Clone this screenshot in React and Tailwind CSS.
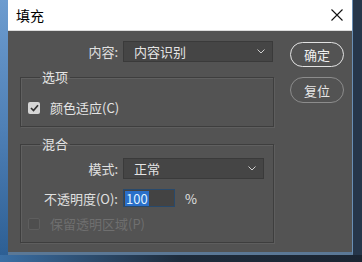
import React from "react";

const font = { fontFamily: '"Microsoft YaHei","Noto Sans CJK SC","Noto Sans",sans-serif' };

function Chevron() {
  return (
    <svg width="8" height="5" viewBox="0 0 8 5" className="shrink-0">
      <path d="M0.5 0.5 L4 4 L7.5 0.5" fill="none" stroke="#cfcfcf" strokeWidth="1" />
    </svg>
  );
}

function Select({ text, w }) {
  return (
    <div className={`flex h-[21px] items-center justify-between border border-[#3a3a3a] bg-[#454545] pl-[10px] pr-[7px] ${w}`}>
      <span className="text-[13px] leading-none text-[#e4e4e4]">{text}</span>
      <Chevron />
    </div>
  );
}

export default function App() {
  return (
    <div className="flex h-[262px] w-[362px] flex-col overflow-hidden bg-[#1d2835]" style={font}>
      <div className="flex h-[255px] w-[362px]">
        <div className="h-full w-[8px] bg-gradient-to-b from-[#6d9ccf] via-[#4f80b6] to-[#2d5f94]" />
        <div className="flex h-full w-[345px] flex-col border-b-[3px] border-r border-b-[#5b7896] border-r-[#6a8fb5]">
          <div className="flex h-[31px] items-center justify-between border-b border-[#dcdcdc] bg-white pl-[8px] pr-[8px]">
            <span className="text-[14px] leading-none text-black">填充</span>
            <svg width="12" height="12" viewBox="0 0 12 12" className="mr-[1px]">
              <path d="M0.5 0.5 L11.5 11.5 M11.5 0.5 L0.5 11.5" stroke="#111" strokeWidth="1.1" fill="none" />
            </svg>
          </div>
          <div className="flex flex-1 bg-[#535353] pl-[12px] pr-[8px]">
            <div className="flex w-[254px] flex-col pt-[10px]">
              <div className="flex items-center">
                <span className="w-[98px] text-right text-[13px] leading-none text-[#e0e0e0]">内容:</span>
                <div className="ml-[5px]">
                  <Select text="内容识别" w="w-[150px]" />
                </div>
              </div>

              <fieldset className="mt-[8px] h-[57px] border border-[#3e3e3e] shadow-[inset_1px_1px_0_#606060,1px_1px_0_#5e5e5e]">
                <legend className="ml-[19px] px-[2px] text-[13px] leading-[14px] text-[#e6e6e6]">选项</legend>
                <div className="flex items-center pl-[7px] pt-[17px]">
                  <div className="flex h-[12px] w-[12px] items-center justify-center rounded-[2px] bg-[#d6d6d6]">
                    <svg width="9" height="8" viewBox="0 0 9 8">
                      <path d="M1 4 L3.5 6.5 L8 1.2" stroke="#333" strokeWidth="1.7" fill="none" />
                    </svg>
                  </div>
                  <span className="ml-[10px] text-[13px] leading-none text-[#e4e4e4]">颜色适应(C)</span>
                </div>
              </fieldset>

              <fieldset className="mt-[10px] h-[106px] border border-[#3e3e3e] shadow-[inset_1px_1px_0_#606060,1px_1px_0_#5e5e5e]">
                <legend className="ml-[19px] px-[2px] text-[13px] leading-[14px] text-[#e6e6e6]">混合</legend>
                <div className="flex items-center pt-[7px]">
                  <span className="w-[97px] text-right text-[13px] leading-none text-[#e0e0e0]">模式:</span>
                  <div className="ml-[5px]">
                    <Select text="正常" w="w-[141px]" />
                  </div>
                </div>
                <div className="mt-[10px] flex items-center">
                  <span className="w-[97px] text-right text-[13px] leading-none text-[#e0e0e0]">不透明度(O):</span>
                  <div className="ml-[5px] flex h-[18px] w-[52px] items-center border border-[#28496b] bg-[#434343] pl-[1px]">
                    <span className="bg-[#2a6fc9] px-[1px] text-[13px] leading-[15px] text-[#dff1ff]">100</span>
                  </div>
                  <span className="ml-[10px] text-[13px] leading-none text-[#e0e0e0]">%</span>
                </div>
                <div className="mt-[10px] flex items-center pl-[7px]">
                  <div className="h-[12px] w-[12px] rounded-[2px] border border-[#5e5e5e] bg-[#4e4e4e]" />
                  <span className="ml-[10px] text-[13px] leading-none text-[#6f6f6f]">保留透明区域(P)</span>
                </div>
              </fieldset>
            </div>
            <div className="ml-[16px] flex flex-col gap-[10px] pt-[11px]">
              <div className="flex h-[25px] w-[54px] items-center justify-center rounded-full border border-[#e2e2e2] text-[13px] leading-none text-[#f0f0f0]">确定</div>
              <div className="flex h-[26px] w-[54px] items-center justify-center rounded-full border border-[#8c8c8c] text-[13px] leading-none text-[#e6e6e6]">复位</div>
            </div>
          </div>
        </div>
        <div className="h-full flex-1 bg-[#26364a]" />
      </div>
      <div className="h-[7px] w-full bg-gradient-to-r from-[#3a6fa5] via-[#1e2c3c] to-[#1b2532]" />
    </div>
  );
}
